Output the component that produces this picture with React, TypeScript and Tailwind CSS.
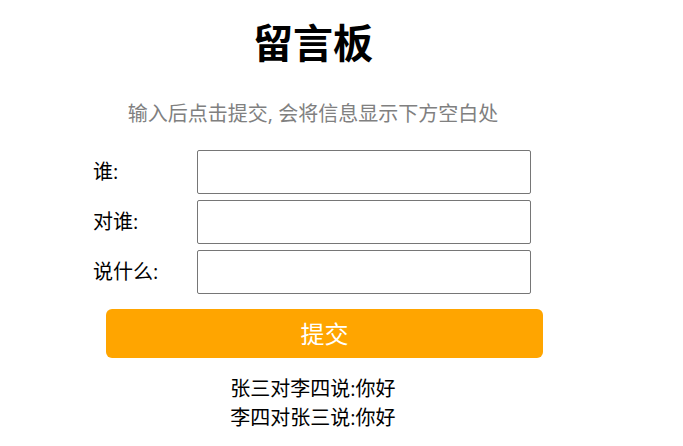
import React from "react";

export default function App() {
  const font = { fontFamily: '"Open Sans", "Noto Sans CJK SC", sans-serif' };
  return (
    <div className="min-h-[446px] w-[683px] bg-white text-black" style={font}>
      <div className="ml-[93px] w-[440px] flex flex-col">
        <h1 className="mt-[14px] text-center text-[40px] font-bold leading-[58px]">留言板</h1>
        <p className="mt-[28px] text-center text-[20px] leading-[28px] text-[#808080]">
          输入后点击提交, 会将信息显示下方空白处
        </p>
        <div className="mt-[22px] flex flex-col gap-[6px]">
          {["谁:", "对谁:", "说什么:"].map((l) => (
            <div key={l} className="flex items-center">
              <label className="w-[104px] text-[20px] leading-[28px]">{l}</label>
              <input className="w-[334px] h-[44px] border border-[#767676] rounded-[2px] bg-white px-2 text-[16px] outline-none" />
            </div>
          ))}
        </div>
        <button className="mt-[15px] ml-[13px] w-[437px] h-[49px] rounded-[6px] bg-[#FFA500] text-white text-[24px]">
          提交
        </button>
        <div className="mt-[16px] w-[440px] text-center text-[20px] leading-[29px]">
          <div>张三对李四说:你好</div>
          <div>李四对张三说:你好</div>
        </div>
      </div>
    </div>
  );
}
